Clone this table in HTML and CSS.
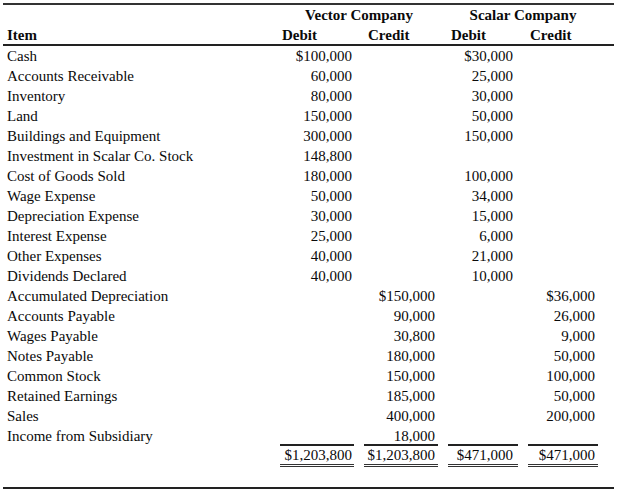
FILE: index.html
```html
<!DOCTYPE html>
<html>
<head>
<meta charset="utf-8">
<link rel="stylesheet" href="styles.css">
</head>
<body>
<div class="sheet">
  <div class="row head1">
    <div></div>
    <div class="co">Vector Company</div>
    <div class="co">Scalar Company</div>
  </div>
  <div class="row head2">
    <div class="item">Item</div>
    <div class="h h1">Debit</div>
    <div class="h h2">Credit</div>
    <div class="h h3">Debit</div>
    <div class="h h4">Credit</div>
  </div>
  <div class="body">
    <div class="row"><div class="item">Cash</div><div class="n c1">$100,000</div><div class="n c2"></div><div class="n c3">$30,000</div><div class="n c4"></div></div>
    <div class="row"><div class="item">Accounts Receivable</div><div class="n c1">60,000</div><div class="n c2"></div><div class="n c3">25,000</div><div class="n c4"></div></div>
    <div class="row"><div class="item">Inventory</div><div class="n c1">80,000</div><div class="n c2"></div><div class="n c3">30,000</div><div class="n c4"></div></div>
    <div class="row"><div class="item">Land</div><div class="n c1">150,000</div><div class="n c2"></div><div class="n c3">50,000</div><div class="n c4"></div></div>
    <div class="row"><div class="item">Buildings and Equipment</div><div class="n c1">300,000</div><div class="n c2"></div><div class="n c3">150,000</div><div class="n c4"></div></div>
    <div class="row"><div class="item">Investment in Scalar Co. Stock</div><div class="n c1">148,800</div><div class="n c2"></div><div class="n c3"></div><div class="n c4"></div></div>
    <div class="row"><div class="item">Cost of Goods Sold</div><div class="n c1">180,000</div><div class="n c2"></div><div class="n c3">100,000</div><div class="n c4"></div></div>
    <div class="row"><div class="item">Wage Expense</div><div class="n c1">50,000</div><div class="n c2"></div><div class="n c3">34,000</div><div class="n c4"></div></div>
    <div class="row"><div class="item">Depreciation Expense</div><div class="n c1">30,000</div><div class="n c2"></div><div class="n c3">15,000</div><div class="n c4"></div></div>
    <div class="row"><div class="item">Interest Expense</div><div class="n c1">25,000</div><div class="n c2"></div><div class="n c3">6,000</div><div class="n c4"></div></div>
    <div class="row"><div class="item">Other Expenses</div><div class="n c1">40,000</div><div class="n c2"></div><div class="n c3">21,000</div><div class="n c4"></div></div>
    <div class="row"><div class="item">Dividends Declared</div><div class="n c1">40,000</div><div class="n c2"></div><div class="n c3">10,000</div><div class="n c4"></div></div>
    <div class="row"><div class="item">Accumulated Depreciation</div><div class="n c1"></div><div class="n c2">$150,000</div><div class="n c3"></div><div class="n c4">$36,000</div></div>
    <div class="row"><div class="item">Accounts Payable</div><div class="n c1"></div><div class="n c2">90,000</div><div class="n c3"></div><div class="n c4">26,000</div></div>
    <div class="row"><div class="item">Wages Payable</div><div class="n c1"></div><div class="n c2">30,800</div><div class="n c3"></div><div class="n c4">9,000</div></div>
    <div class="row"><div class="item">Notes Payable</div><div class="n c1"></div><div class="n c2">180,000</div><div class="n c3"></div><div class="n c4">50,000</div></div>
    <div class="row"><div class="item">Common Stock</div><div class="n c1"></div><div class="n c2">150,000</div><div class="n c3"></div><div class="n c4">100,000</div></div>
    <div class="row"><div class="item">Retained Earnings</div><div class="n c1"></div><div class="n c2">185,000</div><div class="n c3"></div><div class="n c4">50,000</div></div>
    <div class="row"><div class="item">Sales</div><div class="n c1"></div><div class="n c2">400,000</div><div class="n c3"></div><div class="n c4">200,000</div></div>
    <div class="row"><div class="item">Income from Subsidiary</div><div class="n c1"></div><div class="n c2">18,000</div><div class="n c3"></div><div class="n c4"></div></div>
    <div class="row total"><div class="item"></div><div class="n c1 t">$1,203,800</div><div class="n c2 t">$1,203,800</div><div class="n c3 t">$471,000</div><div class="n c4 t">$471,000</div></div>
  </div>
</div>
</body>
</html>
```

FILE: styles.css
```css
html, body {
  margin: 0;
  padding: 0;
  background: #ffffff;
}

body {
  font-family: "Liberation Serif", "Times New Roman", serif;
  font-size: 15px;
  color: #0a0a0a;
}

.sheet {
  margin: 3px 0 0 3px;
  width: 611px;
  border-top: 2px solid #333333;
  border-bottom: 2px solid #222222;
  padding-bottom: 20px;
}

.row {
  display: grid;
  grid-template-columns: 267px 74px 74px 70px 70px;
  column-gap: 10px;
  height: 20px;
  line-height: 20px;
  white-space: nowrap;
}

.head1 {
  font-weight: bold;
}

.head1 .co {
  grid-column: span 2;
  text-align: center;
}

.head2 {
  height: 18px;
  padding-top: 1px;
  line-height: 19px;
  font-weight: bold;
  border-bottom: 2px solid #222222;
}

.item {
  padding-left: 4px;
}

.h1 { padding-left: 2px; }
.h2 { padding-left: 4px; }
.h3 { padding-left: 3px; }
.h4 { padding-left: 2px; }

.n {
  text-align: right;
}

.c1 { padding-right: 2px; }
.c2 { padding-right: 3px; }
.c3 { padding-right: 5px; }
.c4 { padding-right: 3px; }

.total {
  margin-top: -2px;
  height: 23px;
  line-height: 18px;
}

.t {
  border-top: 2px solid #222222;
  border-bottom: 3px double #333333;
}
```
